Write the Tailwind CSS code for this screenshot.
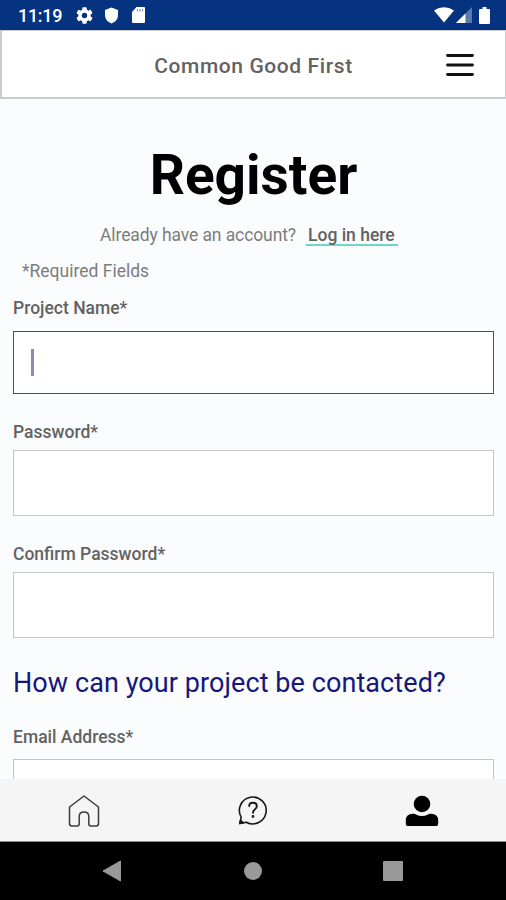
<!DOCTYPE html>
<html lang="en">
<head>
<meta charset="utf-8">
<title>Common Good First</title>
<script src="https://cdn.jsdelivr.net/npm/@tailwindcss/browser@4"></script>
</head>
<body class="w-[506px] h-[900px] overflow-hidden flex flex-col bg-[#fafcfe] font-['Roboto',sans-serif] text-[#626262]">
  <div class="h-[30px] shrink-0 bg-[#05337f] text-white flex items-center pl-[18px] pr-[16px]">
    <span class="text-[18px] leading-[30px] font-medium w-[58px] whitespace-nowrap tracking-[-0.3px] pt-px">11:19</span>
    <svg class="w-[17px] h-[17px]" viewBox="2 2 20 20" fill="currentColor"><path d="M19.14 12.94c.04-.3.06-.61.06-.94s-.02-.64-.07-.94l2.03-1.58a.49.49 0 0 0 .12-.61l-1.92-3.32a.49.49 0 0 0-.59-.22l-2.39.96a7 7 0 0 0-1.62-.94l-.36-2.54a.48.48 0 0 0-.48-.41h-3.84a.48.48 0 0 0-.47.41l-.36 2.54c-.59.24-1.13.57-1.62.94l-2.39-.96a.48.48 0 0 0-.59.22L2.74 8.87a.48.48 0 0 0 .12.61l2.03 1.58c-.05.3-.09.63-.09.94s.02.64.07.94l-2.03 1.58a.49.49 0 0 0-.12.61l1.92 3.32c.12.22.37.29.59.22l2.39-.96c.5.38 1.03.7 1.62.94l.36 2.54c.05.24.24.41.48.41h3.84c.24 0 .44-.17.47-.41l.36-2.54a7 7 0 0 0 1.62-.94l2.39.96c.22.08.47 0 .59-.22l1.92-3.32a.48.48 0 0 0-.12-.61zM12 15.2a3.2 3.2 0 1 1 0-6.4 3.2 3.2 0 0 1 0 6.4z"/></svg>
    <svg class="w-[15px] h-[17px] ml-[11px]" viewBox="0 0 15 17" fill="currentColor"><path d="M7.500.5 14 3V8C14 12 11.500 15 7.500 16.500 3.500 15 1 12 1 8V3L7.500.5z"/></svg>
    <svg class="w-[13px] h-[16px] ml-[13px]" viewBox="0 0 13 16"><path fill="#fff" d="M4.500 0H12q1 0 1 1v14q0 1-1 1H1q-1 0-1-1V5z"/><path stroke="#7d95bf" stroke-width="1.200" d="M5.500 2v2.500M8 2v2.500M10.500 2v2.500"/></svg>
    <span class="flex-1"></span>
    <svg class="w-[20px] h-[16px]" viewBox="0 0 20 16" fill="currentColor"><path d="M0 3.500Q4.500.3 10 .3T20 3.500L10 15.500z"/></svg>
    <svg class="w-[16px] h-[16px] ml-[2px]" viewBox="0 0 16 16"><path fill="#5a7bb2" d="M0 16 16 0v16z"/><path fill="#fff" d="M0 16 9.500 6.500V16z"/></svg>
    <svg class="w-[11px] h-[17px] ml-[7px]" viewBox="0 0 11 17" fill="currentColor"><path d="M3.500 0h4v2H10q1 0 1 1v13q0 1-1 1H1q-1 0-1-1V3q0-1 1-1h2.500z"/></svg>
  </div>
  <header class="h-[69px] shrink-0 bg-white border border-l-2 border-b-2 border-[#cbcbcb] grid grid-cols-[1fr_auto_1fr] items-center">
    <span></span>
    <h1 class="text-[21px] leading-[30px] font-medium tracking-[0.6px] pt-[3px]">Common Good First</h1>
    <button class="justify-self-end mr-[31px] pt-[1px]" aria-label="Menu">
      <svg class="w-[28px] h-[24px] block" viewBox="0 0 28 24" stroke="#111" stroke-width="2.800" stroke-linecap="round"><path d="M1.500 2.500h25M1.500 12h25M1.500 21.500h25"/></svg>
    </button>
  </header>
  <main class="flex-1 min-h-0 overflow-hidden px-[12px] flex flex-col">
    <h2 class="mt-[41px] text-[55px] leading-[70px] h-[70px] font-bold text-black text-center pl-[1px]">Register</h2>
    <p class="mt-[13px] pl-[88px] h-[24px] flex text-[17.500px] leading-[24px] whitespace-nowrap text-[#7c7c7c]">
      <span class="w-[206px] tracking-[-0.1px]">Already have an account?</span>
      <a class="w-[92px] h-[23px] border-b-2 border-[#6fd5cf] pl-[2px] font-medium text-[#626262]">Log in here</a>
    </p>
    <p class="mt-[12px] pl-[10px] text-[17.500px] leading-[24px] text-[#7c7c7c]">*Required Fields</p>
    <label class="mt-[13px] text-[17.500px] leading-[24px] font-medium pl-px">Project Name*</label>
    <div class="mt-[11px] h-[63px] shrink-0 border border-[#4f4789] bg-white flex items-center pl-[17px] ml-px"><span class="w-[3px] h-[27px] bg-[#8f8ab2]"></span></div>
    <label class="mt-[26px] text-[17.500px] leading-[24px] font-medium pl-px">Password*</label>
    <div class="mt-[6px] h-[66px] shrink-0 border border-[#c6c6c6] bg-white ml-px"></div>
    <label class="mt-[26px] text-[17.500px] leading-[24px] font-medium pl-px">Confirm Password*</label>
    <div class="mt-[6px] h-[66px] shrink-0 border border-[#c6c6c6] bg-white ml-px"></div>
    <h3 class="mt-[27px] text-[27px] leading-[36px] tracking-[0.08px] text-[#17177a] whitespace-nowrap pl-px">How can your project be contacted?</h3>
    <label class="mt-[24px] text-[17.500px] leading-[24px] font-medium pl-px">Email Address*</label>
    <div class="mt-[10px] h-[66px] shrink-0 border border-[#c6c6c6] bg-white ml-px"></div>
  </main>
  <nav class="h-[63px] shrink-0 bg-[#f5f5f5] border-b border-[#8b8b8b] grid grid-cols-3 items-center justify-items-center pt-px">
    <svg class="w-[32px] h-[34px]" viewBox="0 0 32 34" fill="none" stroke="#3c3c3c" stroke-width="1.500" stroke-linejoin="round"><path d="M16 2 1.500 13V29.500Q1.500 32 4 32H9Q11.200 32 11.200 29.500V22.500Q11.200 18 16 18T20.800 22.500V29.500Q20.800 32 23 32H28Q30.500 32 30.500 29.500V13z"/></svg>
    <svg class="w-[32px] h-[32px]" viewBox="0 0 32 32" fill="none" stroke="#181818" stroke-width="1.600" stroke-linecap="round" stroke-linejoin="round"><path d="M4.200 22.200A13.400 13.400 0 1 1 9.300 27.200L2.800 28.500z"/><path d="M2.800 28.500 3.500 25.500 6.500 27.800z" fill="#181818"/><path d="M12.200 11Q12.200 7.700 16 7.700T19.800 11.200Q19.800 12.900 17.800 14.500 16 15.800 16 17.800" stroke-width="1.900"/><circle cx="16" cy="21.500" r=".6"/></svg>
    <svg class="w-[34px] h-[32px]" viewBox="0 0 34 32" fill="#000"><circle cx="17" cy="9" r="8.300"/><path d="M.8 28V25.500Q.8 19 8 18.800 10 18.600 11 19.500 14 21 17 21T23 19.500Q24 18.600 26 18.800 33.200 19 33.200 25.500V28.500Q33.200 31 31.500 31H2.500Q.8 31 .8 28.500z"/></svg>
  </nav>
  <footer class="h-[58px] shrink-0 bg-black flex items-center pl-[102px] text-[#999]">
    <svg class="w-[20px] h-[22px]" viewBox="0 0 20 22" fill="currentColor"><path d="M1 11 18.500 1v20z" stroke="currentColor" stroke-linejoin="round"/></svg>
    <span class="w-[18px] h-[18px] rounded-full bg-[#999] ml-[122px]"></span>
    <span class="w-[20px] h-[20px] rounded-[1px] bg-[#999] ml-[121px]"></span>
  </footer>
</body>
</html>
